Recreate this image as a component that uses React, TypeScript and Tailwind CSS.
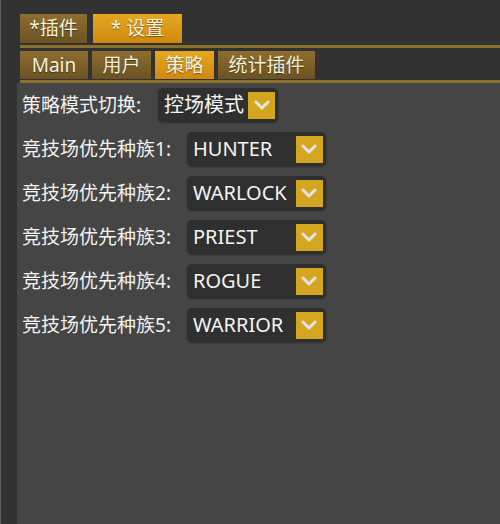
import React from 'react';

const topTabs = [
  { label: '*插件', active: false, w: 'w-[67px]' },
  { label: '* 设置', active: true, w: 'w-[89px]' },
];

const subTabs = [
  { label: 'Main', active: false, w: 'w-[68px]' },
  { label: '用户', active: false, w: 'w-[59px]' },
  { label: '策略', active: true, w: 'w-[59px]' },
  { label: '统计插件', active: false, w: 'w-[97px]' },
];

const races = ['HUNTER', 'WARLOCK', 'PRIEST', 'ROGUE', 'WARRIOR'];

function Tab({ label, active, w, h }: { label: string; active: boolean; w: string; h: string }) {
  return (
    <div
      className={`${w} ${h} flex items-center justify-center text-[19px] text-[#f6f1de] [text-shadow:0_1px_1px_rgba(0,0,0,0.45)] ${
        active
          ? 'bg-gradient-to-b from-[#e4a820] to-[#d1880f]'
          : 'bg-gradient-to-b from-[#8e6e2f] to-[#6c5223]'
      }`}
    >
      {label}
    </div>
  );
}

function Select({ value, w }: { value: string; w: string }) {
  return (
    <div className={`${w} h-[34px] rounded-[5px] bg-[#2f2f2f] shadow-[0_1px_2px_rgba(0,0,0,0.35)] flex items-center justify-between pl-[6px] pr-[3px]`}>
      <span className="text-[20px] text-[#f4f4f4] leading-none">{value}</span>
      <span className="w-[27px] h-[27px] bg-[#d4a61f] flex items-center justify-center">
        <svg width="16" height="10" viewBox="0 0 16 10">
          <path d="M2 2 L8 8 L14 2" fill="none" stroke="#e4e4e4" strokeWidth="3" strokeLinecap="round" strokeLinejoin="round" />
        </svg>
      </span>
    </div>
  );
}

export default function App() {
  return (
    <div className="w-[500px] h-[524px] bg-[#323232] border-l border-[#5c5c5c] flex flex-col font-['Noto_Sans','Noto_Sans_CJK_SC',sans-serif] overflow-hidden">
      <div className="pt-[14px] pl-[19px]">
        <div className="flex gap-[6px]">
          {topTabs.map((t) => (
            <Tab key={t.label} {...t} h="h-[29px]" />
          ))}
        </div>
        <div className="mt-[2px] h-[3px] bg-[#8a7130]" />
        <div className="mt-[3px] flex gap-[4px]">
          {subTabs.map((t) => (
            <Tab key={t.label} {...t} h="h-[28px]" />
          ))}
        </div>
        <div className="mt-[1px] h-[3px] bg-[#8a7130]" />
      </div>
      <div className="flex-1 ml-[16px] bg-[#454545] pt-[5px] pl-[5px] flex flex-col gap-[10px]">
        <div className="flex items-center gap-[17px] h-[34px]">
          <span className="text-[19px] text-[#f2f2f2]">策略模式切换:</span>
          <Select value="控场模式" w="w-[120px]" />
        </div>
        {races.map((r, i) => (
          <div key={r} className="flex items-center gap-[16px] h-[34px]">
            <span className="text-[19px] text-[#f2f2f2]">竞技场优先种族{i + 1}:</span>
            <Select value={r} w="w-[139px]" />
          </div>
        ))}
      </div>
    </div>
  );
}
